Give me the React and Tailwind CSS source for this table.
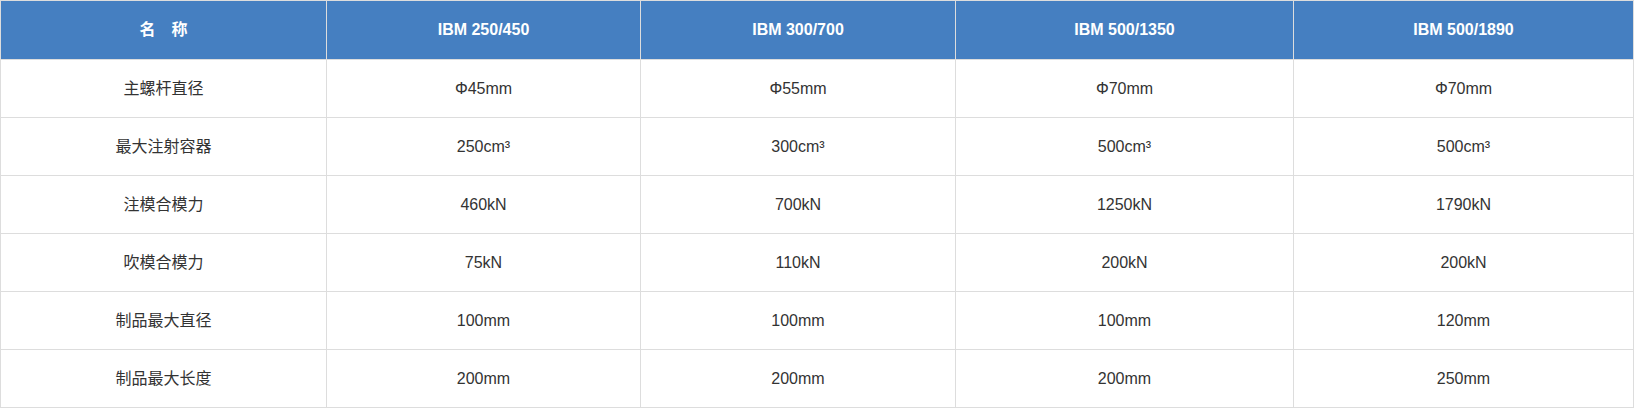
const columns = ['IBM 250/450', 'IBM 300/700', 'IBM 500/1350', 'IBM 500/1890'];

const rows = [
  { name: '主螺杆直径', values: ['Φ45mm', 'Φ55mm', 'Φ70mm', 'Φ70mm'] },
  { name: '最大注射容器', values: ['250cm³', '300cm³', '500cm³', '500cm³'] },
  { name: '注模合模力', values: ['460kN', '700kN', '1250kN', '1790kN'] },
  { name: '吹模合模力', values: ['75kN', '110kN', '200kN', '200kN'] },
  { name: '制品最大直径', values: ['100mm', '100mm', '100mm', '120mm'] },
  { name: '制品最大长度', values: ['200mm', '200mm', '200mm', '250mm'] },
];

export default function App() {
  return (
    <div className="bg-white w-[1642px] h-[413px] font-['Liberation_Sans','Noto_Sans_CJK_SC',sans-serif]">
      <table className="table-fixed border-collapse w-[1633px] text-[16px] text-[#333]">
        <colgroup>
          <col className="w-[326px]" />
          <col className="w-[314px]" />
          <col className="w-[315px]" />
          <col className="w-[338px]" />
          <col className="w-[340px]" />
        </colgroup>
        <thead>
          <tr className="bg-[#457fc1] text-white font-bold">
            <th className="h-[59px] border border-[#ddd] text-center p-0">名　称</th>
            {columns.map((c) => (
              <th key={c} className="h-[59px] border border-[#ddd] text-center p-0">
                {c}
              </th>
            ))}
          </tr>
        </thead>
        <tbody>
          {rows.map((r) => (
            <tr key={r.name}>
              <td className="h-[58px] border border-[#ddd] text-center p-0">{r.name}</td>
              {r.values.map((v, i) => (
                <td key={i} className="h-[58px] border border-[#ddd] text-center p-0">
                  {v}
                </td>
              ))}
            </tr>
          ))}
        </tbody>
      </table>
    </div>
  );
}
